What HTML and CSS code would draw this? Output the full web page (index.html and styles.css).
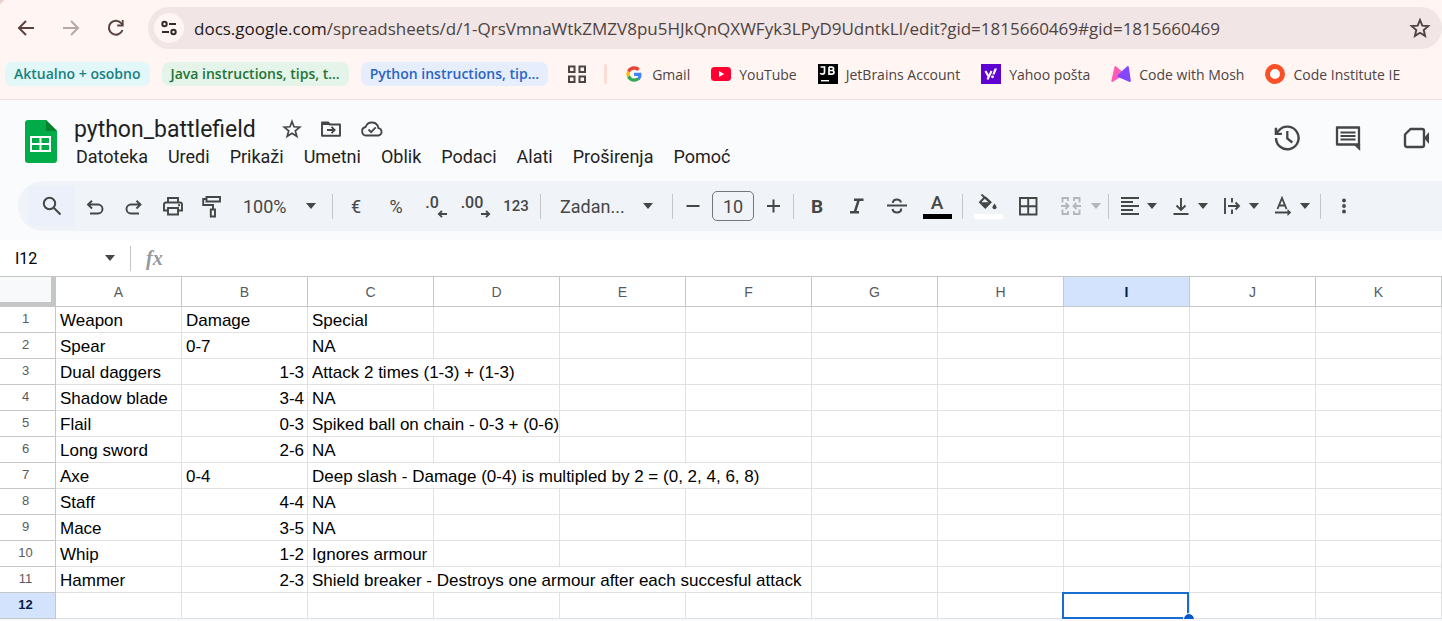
FILE: index.html
```html
<!DOCTYPE html>
<html lang="hr">
<head>
<meta charset="utf-8">
<title>python_battlefield</title>
<link rel="stylesheet" href="styles.css">
</head>
<body>
<div class="browser">
  <div class="nav-row">
    <button class="nav-btn" aria-label="Back"><svg width="24" height="24" viewBox="0 0 24 24"><path d="M20 12H5M12 5l-7 7 7 7" fill="none" stroke="currentColor" stroke-width="2"/></svg></button>
    <button class="nav-btn nav-off" aria-label="Forward"><svg width="24" height="24" viewBox="0 0 24 24"><path d="M4 12h15M12 5l7 7-7 7" fill="none" stroke="currentColor" stroke-width="2"/></svg></button>
    <button class="nav-btn" aria-label="Reload"><svg width="24" height="24" viewBox="0 0 24 24"><path d="M18.500 14A7 7 0 1 1 17.500 7.500L19 9" fill="none" stroke="currentColor" stroke-width="2"/><path d="M19.600 4v6.400h-6.400V8.600h4.600V4z" fill="currentColor"/></svg></button>
    <div class="omnibox">
      <button class="site-info" aria-label="Site information"><svg width="20" height="20" viewBox="0 0 20 20" fill="none" stroke="currentColor" stroke-width="2"><circle cx="5.500" cy="6" r="2.200"/><path d="M10 6h7M3 14h7"/><circle cx="14.500" cy="14" r="2.200"/></svg></button>
      <div class="url" role="textbox" aria-label="Address"><span class="host">docs.google.com</span>/spreadsheets/d/1-QrsVmnaWtkZMZV8pu5HJkQnQXWFyk3LPyD9UdntkLI/edit?gid=1815660469#gid=1815660469</div>
      <button class="bare" aria-label="Bookmark this tab"><svg width="24" height="24" viewBox="0 0 24 24"><path d="M12 4l2.300 5.600 6 .5-4.600 3.900 1.400 5.900-5.100-3.100-5.100 3.100 1.400-5.900L3.700 10.100l6-.5z" fill="none" stroke="currentColor" stroke-width="1.900"/></svg></button>
    </div>
  </div>
  <nav class="bookmarks" aria-label="Bookmarks">
    <a class="chip chip-cyan" href="#">Aktualno + osobno</a>
    <a class="chip chip-green" href="#">Java instructions, tips, t...</a>
    <a class="chip chip-blue" href="#">Python instructions, tip...</a>
    <button class="bare apps" aria-label="Apps"><svg width="20" height="20" viewBox="0 0 20 20" fill="none" stroke="currentColor" stroke-width="2"><path d="M2 2.500h5.500V8H2zM12.500 2.500H18V8h-5.500zM2 12.500h5.500V18H2zM12.500 12.500H18V18h-5.500z"/></svg></button>
    <span class="mark-sep"></span>
    <a class="mark" href="#"><svg width="20" height="20" viewBox="0 0 48 48"><path fill="#EA4335" d="M24 13.500c3.100 0 5.900 1.100 8.100 3.100l5.800-5.700C34.300 7.500 29.600 5.500 24 5.500c-7.200 0-13.500 4.100-16.500 10.200l6.700 5.200c1.500-4.300 5.200-7.400 9.800-7.400z"/><path fill="#4285F4" d="M42 24.500c0-1.300-.1-2.400-.4-3.500H24v7.500h10.200c-.5 2.400-1.900 4.200-3.800 5.500l6.500 5C40.400 35.600 42 30.500 42 24.500z"/><path fill="#FBBC05" d="M14.200 27.200a11 11 0 0 1 0-6.400l-6.700-5.100a18.500 18.500 0 0 0 0 16.600z"/><path fill="#34A853" d="M24 42.500c5 0 9.500-1.600 12.900-4.500l-6.500-5c-1.700 1.200-3.800 1.800-6.400 1.800-4.600 0-8.300-3.200-9.800-7.600l-6.700 5.100C10.500 38.400 16.800 42.500 24 42.500z"/></svg>Gmail</a>
    <a class="mark" href="#"><svg width="20" height="20" viewBox="0 0 20 20"><rect y="3" width="20" height="14" rx="3.500" fill="#ff0033"/><path d="M8 7l5.200 3L8 13z" fill="#fff"/></svg>YouTube</a>
    <a class="mark" href="#"><svg width="20" height="20" viewBox="0 0 20 20"><path d="M0 0h20v20H0z"/><path d="M2.500 3h4v5q0 2.200-2.200 2.200-1.500 0-2-1.200M11 3.100v7h2.800q2.200 0 2.200-1.900 0-1.700-2.200-1.700H11m2.600 0q2 0 2-1.700 0-1.700-2-1.700H11" fill="none" stroke="#fff" stroke-width="1.700"/><path d="M3 16h8v1.400H3z" fill="#fff"/></svg>JetBrains Account</a>
    <a class="mark" href="#"><svg width="20" height="20" viewBox="0 0 20 20"><path d="M0 0h20v20H0z" fill="#5f01d1"/><path d="M4.500 7l3 5.500M10.500 7l-4 8.500" fill="none" stroke="#fff" stroke-width="2.100"/><path d="M13.500 4.500H16l-2.400 6h-2.300z" fill="#fff"/><circle cx="11.500" cy="12.800" r="1.400" fill="#fff"/></svg>Yahoo pošta</a>
    <a class="mark" href="#"><svg width="20" height="20" viewBox="0 0 20 20"><path d="M3.500 2.700Q4.200 1.500 5.200 2.500L14 10 2 17.700Q0 18.500.4 16.500z" fill="#ff5cb8"/><path d="M16 2.500q1.300-1 1.800.5l2 13.500q.2 2-1.800 1.200l-11-4.700q-1.200-1-.2-2z" fill="#8446ff"/></svg>Code with Mosh</a>
    <a class="mark" href="#"><svg width="20" height="20" viewBox="0 0 20 20"><circle cx="10" cy="10" r="7.500" fill="#fff" stroke="#fb4f27" stroke-width="5"/></svg>Code Institute IE</a>
  </nav>
</div>

<header class="doc-head">
  <svg class="logo" width="32" height="43" viewBox="0 0 32 43"><path d="M3 0h18l11 11v29a3 3 0 0 1-3 3H3a3 3 0 0 1-3-3V3a3 3 0 0 1 3-3z" fill="#00ac47"/><path d="M21 0l11 11H21z" fill="#00832d"/><path d="M5 16h21v16H5zM7 18v5h7.500v-5zM16.500 18v5H24v-5zM7 25v5h7.500v-5zM16.500 25v5H24v-5z" fill="#fff" fill-rule="evenodd"/></svg>
  <div class="doc-main">
    <div class="title-row">
      <h1 class="title">python_battlefield</h1>
      <button class="bare" aria-label="Star"><svg width="20" height="20" viewBox="0 0 20 20"><path d="M10 2.500l2 5.300 5.700.4-4.400 3.600 1.500 5.500-4.800-3.100-4.800 3.100 1.500-5.500-4.400-3.600 5.700-.4z" fill="none" stroke="currentColor" stroke-width="1.700"/></svg></button>
      <button class="bare" aria-label="Move"><svg width="22" height="20" viewBox="0 0 22 20"><path d="M2 3.500h6l2 2h10v11.200H2z" fill="none" stroke="currentColor" stroke-width="1.900" stroke-linejoin="round"/><path d="M2 3h6l2 3H2z" fill="currentColor"/><path d="M7 11h7M11.500 7.800l3.200 3.200-3.200 3.200" fill="none" stroke="currentColor" stroke-width="1.800"/></svg></button>
      <button class="bare" aria-label="Saved to Drive"><svg width="24" height="20" viewBox="0 0 24 20" fill="none" stroke="currentColor" stroke-width="1.800"><path d="M6 16.500a4.300 4.300 0 0 1-.4-8.500A6.600 6.600 0 0 1 18.400 9.200 3.700 3.700 0 0 1 18.500 16.500z"/><path d="M8.500 10.500l2.600 2.600 4.600-4.700"/></svg></button>
    </div>
    <nav class="menus" aria-label="Menu">
      <button class="menu">Datoteka</button><button class="menu">Uredi</button><button class="menu">Prikaži</button><button class="menu">Umetni</button><button class="menu">Oblik</button><button class="menu">Podaci</button><button class="menu">Alati</button><button class="menu">Proširenja</button><button class="menu">Pomoć</button>
    </nav>
  </div>
  <div class="doc-actions">
    <button class="bare" aria-label="History"><svg width="28" height="28" viewBox="0 0 28 28"><path d="M3 14a11.300 11.300 0 1 0 2.800-7.500L3.500 9" fill="none" stroke="currentColor" stroke-width="2.400"/><path d="M1.700 3.800V11h7.200V8.700H4.200V3.800z" fill="currentColor"/><path d="M14.300 7v7.500l5 4" fill="none" stroke="currentColor" stroke-width="2.300"/></svg></button>
    <button class="bare" aria-label="Comments"><svg width="28" height="28" viewBox="0 0 28 28"><path d="M3 3.500h22v17H3z" fill="none" stroke="currentColor" stroke-width="2.300" stroke-linejoin="round"/><path d="M19 20h7.200v7z" fill="currentColor"/><path d="M6.500 8.500h15M6.500 12h15M6.500 15.500h15" stroke="currentColor" stroke-width="1.900"/></svg></button>
    <button class="bare meet" aria-label="Meet"><svg width="28" height="28" viewBox="0 0 28 28"><path d="M8.500 5H20a2 2 0 0 1 2 2v14a2 2 0 0 1-2 2H5a2 2 0 0 1-2-2V10.500z" fill="none" stroke="currentColor" stroke-width="2.400" stroke-linejoin="round"/><path d="M22 14l5-6v12z" fill="currentColor"/></svg></button>
  </div>
</header>

<div class="toolbar-wrap">
  <div class="toolbar" role="toolbar" aria-label="Formatting">
    <div class="group group-first">
      <button class="tool tool-search" aria-label="Search"><svg width="24" height="24" viewBox="0 0 24 24" fill="none" stroke="currentColor" stroke-width="2"><circle cx="9.500" cy="9.500" r="5.700"/><path d="M13.700 13.700l6.800 6.800"/></svg></button>
      <button class="tool" aria-label="Undo"><svg width="24" height="24" viewBox="0 0 24 24" fill="none" stroke="currentColor" stroke-width="1.900"><path d="M5 10.500h10a4.500 4.500 0 0 1 0 9H7M9 6.700L5 10.500 9 14.500"/></svg></button>
      <button class="tool" aria-label="Redo"><svg width="24" height="24" viewBox="0 0 24 24" fill="none" stroke="currentColor" stroke-width="1.900"><path d="M18 10.500H9a4.500 4.500 0 0 0 0 9h8M14.500 6.700l4 3.800-4 4"/></svg></button>
      <button class="tool" aria-label="Print"><svg width="24" height="24" viewBox="0 0 24 24" fill="none" stroke="currentColor" stroke-width="1.900"><path d="M7 8V4h10v4M7 16.500H3v-6q0-2 2-2h14q2 0 2 2v6h-4"/><path d="M7 14h10v6.500H7z"/><path d="M17 11.200h2"/></svg></button>
      <button class="tool" aria-label="Paint format"><svg width="24" height="24" viewBox="0 0 24 24" fill="none" stroke="currentColor" stroke-width="1.900"><path d="M6.500 3h13.500v4.500H6.500zM6.500 5H3.200v6h9.800v4M10.800 15.500h4.200v7h-4.200z"/></svg></button>
    </div>
    <div class="combo combo-zoom"><select class="combo-select" aria-label="Zoom"><option>100%</option></select><svg class="caret" width="10" height="6" viewBox="0 0 10 6"><path d="M0 0h10L5 6z" fill="currentColor"/></svg></div>
    <span class="sep"></span>
    <div class="group group-number">
      <button class="tool tool-text" aria-label="Currency">€</button>
      <button class="tool tool-text" aria-label="Percent">%</button>
      <button class="tool tool-dec" aria-label="Fewer decimals"><span>.0</span><svg width="10" height="8" viewBox="0 0 10 8"><path d="M10 4H2M5 .8L1.800 4 5 7.200" fill="none" stroke="currentColor" stroke-width="1.800"/></svg></button>
      <button class="tool tool-dec" aria-label="More decimals"><span>.00</span><svg width="10" height="8" viewBox="0 0 10 8"><path d="M0 4h8M5 .8L8.200 4 5 7.200" fill="none" stroke="currentColor" stroke-width="1.800"/></svg></button>
      <button class="tool tool-123">123</button>
    </div>
    <span class="sep"></span>
    <div class="combo combo-font"><select class="combo-select" aria-label="Font"><option>Zadan...</option></select><svg class="caret" width="10" height="6" viewBox="0 0 10 6"><path d="M0 0h10L5 6z" fill="currentColor"/></svg></div>
    <span class="sep"></span>
    <div class="group">
      <button class="tool" aria-label="Decrease font size"><svg width="24" height="24" viewBox="0 0 24 24"><path d="M5.500 12h13" stroke="currentColor" stroke-width="2"/></svg></button>
      <input class="size-box" type="text" value="10" aria-label="Font size">
      <button class="tool" aria-label="Increase font size"><svg width="24" height="24" viewBox="0 0 24 24"><path d="M5 12h13M11.500 5.500v13" stroke="currentColor" stroke-width="2"/></svg></button>
    </div>
    <span class="sep"></span>
    <div class="group group-style">
      <button class="tool tool-bold">B</button>
      <button class="tool" aria-label="Italic"><svg width="24" height="24" viewBox="0 0 24 24"><path d="M9 5.700h9.500M5 18.300h9M13.800 5.700L9.700 18.300" fill="none" stroke="currentColor" stroke-width="2.500"/></svg></button>
      <button class="tool" aria-label="Strikethrough"><svg width="24" height="24" viewBox="0 0 24 24" fill="none" stroke="currentColor" stroke-width="2"><path d="M2 11.500h20M7.800 9q.3-3.500 4.200-3.500 3.200 0 4 3M16.200 14.500q0 4-4.200 4-3.900 0-4.500-3.500"/></svg></button>
      <button class="tool tool-color" aria-label="Text colour"><span>A</span><i class="swatch swatch-black"></i></button>
    </div>
    <span class="sep"></span>
    <div class="group group-fill">
      <button class="tool tool-color" aria-label="Fill colour"><svg width="20" height="18" viewBox="0 0 20 18"><path d="M3.500 .5l9.200 8.500M6.500 3.500L2 8.300l5.300 5.300 5.300-5.300-5.400-5.200" fill="none" stroke="currentColor" stroke-width="1.900"/><path d="M2.500 8.300h9.800l-5 5z" fill="currentColor"/><path d="M16.500 9.500q2 2.600 2 3.700a2 2 0 0 1-4 0q0-1.100 2-3.700z" fill="currentColor"/></svg><i class="swatch swatch-white"></i></button>
      <button class="tool" aria-label="Borders"><svg width="24" height="24" viewBox="0 0 24 24"><path d="M4 4h16.500v16.500H4zM12.200 4v16.500M4 12.200h16.500" fill="none" stroke="currentColor" stroke-width="1.900"/></svg></button>
      <button class="tool tool-merge" aria-label="Merge cells" disabled><svg width="22" height="20" viewBox="0 0 22 20" fill="none" stroke="currentColor" stroke-width="1.900"><path d="M8 5V2H2.500v4.500M2.500 13.500V18H8v-3M14 5V2h5.500v4.500M19.500 13.500V18H14v-3M1 10h7M5.500 7l3 3-3 3M21 10h-7M16.500 7l-3 3 3 3"/></svg><svg width="10" height="6" viewBox="0 0 10 6"><path d="M0 0h10L5 6z" fill="currentColor"/></svg></button>
    </div>
    <span class="sep"></span>
    <div class="group group-align">
      <button class="tool tool-drop" aria-label="Horizontal align"><svg width="20" height="20" viewBox="0 0 20 20"><path d="M1 2h18M1 6h12M1 10h18M1 14h12M1 18h18" stroke="currentColor" stroke-width="1.800"/></svg><svg width="10" height="6" viewBox="0 0 10 6"><path d="M0 0h10L5 6z" fill="currentColor"/></svg></button>
      <button class="tool tool-drop" aria-label="Vertical align"><svg width="20" height="20" viewBox="0 0 20 20"><path d="M2.500 18h15M10 2v12M5.500 9.500L10 14l4.500-4.500" fill="none" stroke="currentColor" stroke-width="1.900"/></svg><svg width="10" height="6" viewBox="0 0 10 6"><path d="M0 0h10L5 6z" fill="currentColor"/></svg></button>
      <button class="tool tool-drop" aria-label="Text wrapping"><svg width="20" height="20" viewBox="0 0 20 20"><path d="M3 2v16M10 2v4.500M10 13.500V18M6 10h10.500M13.500 6.500L17 10l-3.500 3.500" fill="none" stroke="currentColor" stroke-width="1.900"/></svg><svg width="10" height="6" viewBox="0 0 10 6"><path d="M0 0h10L5 6z" fill="currentColor"/></svg></button>
      <button class="tool tool-drop" aria-label="Text rotation"><svg width="20" height="20" viewBox="0 0 20 20"><path d="M4.500 13L9 2l4.500 11M6 9.500h6M2 16.500h14" fill="none" stroke="currentColor" stroke-width="1.800"/><path d="M14.500 13l3.700 3.500-3.700 3.500z" fill="currentColor"/></svg><svg width="10" height="6" viewBox="0 0 10 6"><path d="M0 0h10L5 6z" fill="currentColor"/></svg></button>
    </div>
    <span class="sep"></span>
    <div class="group group-more"><button class="tool" aria-label="More"><svg width="24" height="24" viewBox="0 0 24 24" fill="currentColor"><circle cx="12" cy="6.500" r="1.900"/><circle cx="12" cy="12" r="1.900"/><circle cx="12" cy="17.500" r="1.900"/></svg></button></div>
  </div>
</div>

<div class="formula-bar">
  <input class="name-box" type="text" value="I12" aria-label="Name box">
  <button class="bare name-drop" aria-label="Named ranges"><svg width="10" height="6" viewBox="0 0 10 6"><path d="M0 0h10L5 6z" fill="currentColor"/></svg></button>
  <span class="sep"></span>
  <span class="fx" aria-hidden="true">fx</span>
  <input class="formula" type="text" aria-label="Formula">
</div>

<table class="sheet">
  <colgroup><col class="num-col"><col span="11"></colgroup>
  <thead>
    <tr><th class="corner"></th><th>A</th><th>B</th><th>C</th><th>D</th><th>E</th><th>F</th><th>G</th><th>H</th><th class="active">I</th><th>J</th><th>K</th></tr>
  </thead>
  <tbody>
    <tr><th>1</th><td>Weapon</td><td>Damage</td><td>Special</td><td></td><td></td><td></td><td></td><td></td><td></td><td></td><td></td></tr>
    <tr><th>2</th><td>Spear</td><td>0-7</td><td>NA</td><td></td><td></td><td></td><td></td><td></td><td></td><td></td><td></td></tr>
    <tr><th>3</th><td>Dual daggers</td><td class="end">1-3</td><td colspan="2">Attack 2 times (1-3) + (1-3)</td><td></td><td></td><td></td><td></td><td></td><td></td><td></td></tr>
    <tr><th>4</th><td>Shadow blade</td><td class="end">3-4</td><td>NA</td><td></td><td></td><td></td><td></td><td></td><td></td><td></td><td></td></tr>
    <tr><th>5</th><td>Flail</td><td class="end">0-3</td><td colspan="2">Spiked ball on chain - 0-3 + (0-6)</td><td></td><td></td><td></td><td></td><td></td><td></td><td></td></tr>
    <tr><th>6</th><td>Long sword</td><td class="end">2-6</td><td>NA</td><td></td><td></td><td></td><td></td><td></td><td></td><td></td><td></td></tr>
    <tr><th>7</th><td>Axe</td><td>0-4</td><td colspan="4">Deep slash - Damage (0-4) is multipled by 2 = (0, 2, 4, 6, 8)</td><td></td><td></td><td></td><td></td><td></td></tr>
    <tr><th>8</th><td>Staff</td><td class="end">4-4</td><td>NA</td><td></td><td></td><td></td><td></td><td></td><td></td><td></td><td></td></tr>
    <tr><th>9</th><td>Mace</td><td class="end">3-5</td><td>NA</td><td></td><td></td><td></td><td></td><td></td><td></td><td></td><td></td></tr>
    <tr><th>10</th><td>Whip</td><td class="end">1-2</td><td>Ignores armour</td><td></td><td></td><td></td><td></td><td></td><td></td><td></td><td></td></tr>
    <tr><th>11</th><td>Hammer</td><td class="end">2-3</td><td colspan="4">Shield breaker - Destroys one armour after each succesful attack</td><td></td><td></td><td></td><td></td><td></td></tr>
    <tr><th class="active">12</th><td></td><td></td><td></td><td></td><td></td><td></td><td></td><td></td><td class="selected"></td><td></td><td></td></tr>
  </tbody>
</table>
</body>
</html>
```
FILE: styles.css
```css
* { box-sizing: border-box; }
body {
  margin: 0;
  background: #f8f9fa;
  font-family: Roboto, sans-serif;
  color: #1f1f1f;
  overflow: hidden;
}
svg { display: block; flex: none; }
button, input, select { font: inherit; color: inherit; margin: 0; padding: 0; border: 0; background: none; }
a { color: inherit; text-decoration: none; }
.bare { display: flex; align-items: center; justify-content: center; }

/* Browser chrome */
.browser {
  background: linear-gradient(135deg, #e6cfc6 2px, transparent 4px) #fff6f4;
  border-bottom: 1px solid #f1dfdb;
  color: #4d4342;
  font-family: "Open Sans", "Noto Sans", sans-serif;
}
.nav-row { display: flex; align-items: center; padding: 7px 0 0 3px; }
.nav-btn { display: flex; align-items: center; justify-content: center; width: 45px; height: 42px; color: #5a413e; }
.nav-off { color: #b5a9a7; }
.omnibox {
  flex: 1;
  display: flex;
  align-items: center;
  gap: 10px;
  height: 42px;
  min-width: 0;
  margin-left: 10px;
  padding: 0 10px 0 6px;
  border-radius: 21px;
  background: #f1e5e5;
}
.site-info { display: flex; align-items: center; justify-content: center; flex: none; width: 30px; height: 30px; border-radius: 50%; background: #fff6f4; color: #332b2a; }
.url { flex: 1; min-width: 0; overflow: hidden; white-space: nowrap; font-size: 17px; }
.host { color: #221a19; }
.bookmarks { display: flex; align-items: center; height: 50px; padding-left: 5px; font-size: 14px; white-space: nowrap; }
.chip { height: 24px; line-height: 24px; padding: 0 9px; margin-right: 12px; border-radius: 7px; font-weight: 600; }
.chip-cyan { background: #e2f7f8; color: #17807f; }
.chip-green { background: #e5f4e8; color: #1f7336; }
.chip-blue { background: #e6eefd; color: #2b64c4; }
.apps { width: 20px; margin: 0 17px 0 7px; }
.mark-sep { width: 3px; height: 20px; background: #fbdcd5; border-radius: 2px; margin-right: 17px; }
.mark { display: flex; align-items: center; gap: 8px; margin-right: 21px; }

/* Document header */
.doc-head { display: flex; align-items: flex-start; height: 81px; padding: 17px 12px 0 25px; background: #f9fbfd; color: #444746; }
.logo { margin-top: 3px; }
.doc-main { flex: 1; margin-left: 17px; }
.title-row { display: flex; align-items: center; height: 24px; gap: 18px; }
.title { margin: 0 8px 0 0; font-size: 23px; font-weight: 400; color: #1f1f1f; }
.menus { display: flex; gap: 20px; padding-left: 2px; margin-top: 4px; }
.menu { font-size: 18px; line-height: 24px; color: #1f1f1f; }
.doc-actions { display: flex; gap: 33px; padding-top: 7px; }
.meet { margin-left: 7px; }

/* Toolbar */
.toolbar-wrap { background: #f9fbfd; padding: 0 0 9px 18px; overflow: hidden; }
.toolbar { display: flex; align-items: center; height: 50px; padding-left: 10px; border-radius: 25px 0 0 25px; background: #f0f3f8; color: #444746; white-space: nowrap; }
.group { display: flex; align-items: center; flex: none; }
.group-number { padding: 0 4px 0 3px; }
.group-style { padding: 0 5px 0 3px; }
.group-fill { padding-left: 5px; }
.group-align { padding: 0 2px 0 5px; }
.group-more { padding-left: 3px; }
.tool { display: flex; align-items: center; justify-content: center; width: 39px; height: 40px; }
.group-number .tool, .group-style .tool, .group-fill .tool, .group-more .tool { width: 40px; }
.group-first .tool-search { width: 47px; background: #ecf0fa; }
.tool-text { font-size: 18px; }
.tool-123 { font-size: 15px; font-weight: 500; }
.tool-bold { font-size: 19px; font-weight: 700; }
.tool-dec { display: grid; align-content: center; justify-content: center; font-size: 16px; font-weight: 500; line-height: 15px; }
.tool-dec span { padding-right: 8px; }
.tool-dec svg { justify-self: end; }
.tool-color { flex-direction: column; font-size: 19px; line-height: 18px; font-weight: 500; }
.swatch { width: 29px; height: 5px; margin-top: 2px; }
.swatch-black { background: #000; }
.swatch-white { background: #fff; }
.group-fill .tool-merge { width: 60px; gap: 9px; justify-content: flex-end; padding-right: 7px; color: #b4b7ba; }
.group-align .tool-drop { width: 51px; gap: 7px; justify-content: flex-start; padding-left: 6px; }
.sep { flex: none; width: 1px; height: 25px; background: #c4c7c9; }
.combo { display: grid; align-items: center; flex: none; font-size: 18px; }
.combo > * { grid-area: 1 / 1; }
.combo-select { appearance: none; width: 100%; height: 40px; }
.caret { justify-self: end; pointer-events: none; }
.combo-zoom { width: 101px; }
.combo-zoom .combo-select { padding-left: 12px; }
.combo-zoom .caret { margin-right: 16px; }
.combo-font { width: 131px; }
.combo-font .combo-select { padding-left: 19px; }
.combo-font .caret { margin-right: 19px; }
.size-box { width: 42px; height: 30px; border: 1px solid #747775; border-radius: 5px; text-align: center; font-size: 18px; }

/* Formula bar */
.formula-bar { display: flex; align-items: center; height: 36px; padding-left: 15px; background: #fff; color: #444746; }
.name-box { width: 80px; color: #000; font-size: 16px; }
.name-drop { width: 30px; margin-right: 5px; }
.fx { margin-left: 15px; font: italic 700 20px "Liberation Serif", serif; color: #96999c; }
.formula { flex: 1; min-width: 0; height: 28px; }

/* Grid */
.sheet { width: 100%; table-layout: fixed; border-collapse: separate; border-spacing: 0; font-family: "Liberation Sans", Arial, sans-serif; color: #000; background: #fff; }
.num-col { width: 56px; }
.sheet th { padding: 0; border: solid #c4c7c5; border-width: 0 1px 1px 0; font: 14px/24px "Liberation Sans", Arial, sans-serif; color: #575b5f; }
.sheet thead th { height: 31px; border-top-width: 1px; }
.sheet tbody th { height: 26px; padding-right: 4px; vertical-align: top; font-size: 13px; }
.sheet .corner { background: #f8f9fa; border-right: 5px solid #c4c7c5; border-bottom: 5px solid #c4c7c5; }
.sheet .active { background: #d3e3fd; color: #041e49; font-weight: 700; }
.sheet td { height: 26px; padding: 2px 4px 0; border: solid #e1e1e1; border-width: 0 1px 1px 0; font-size: 17px; line-height: 23px; white-space: nowrap; }
.sheet .end { text-align: right; padding-right: 3px; }
.sheet .selected { position: relative; }
.selected::before { content: ""; position: absolute; inset: -1px 0 -1px -2px; border: 2px solid #1a6dd0; }
.selected::after { content: ""; position: absolute; right: -5px; bottom: -6px; width: 10px; height: 10px; border-radius: 50%; background: #0b57d0; outline: 1px solid #fff; }
```
